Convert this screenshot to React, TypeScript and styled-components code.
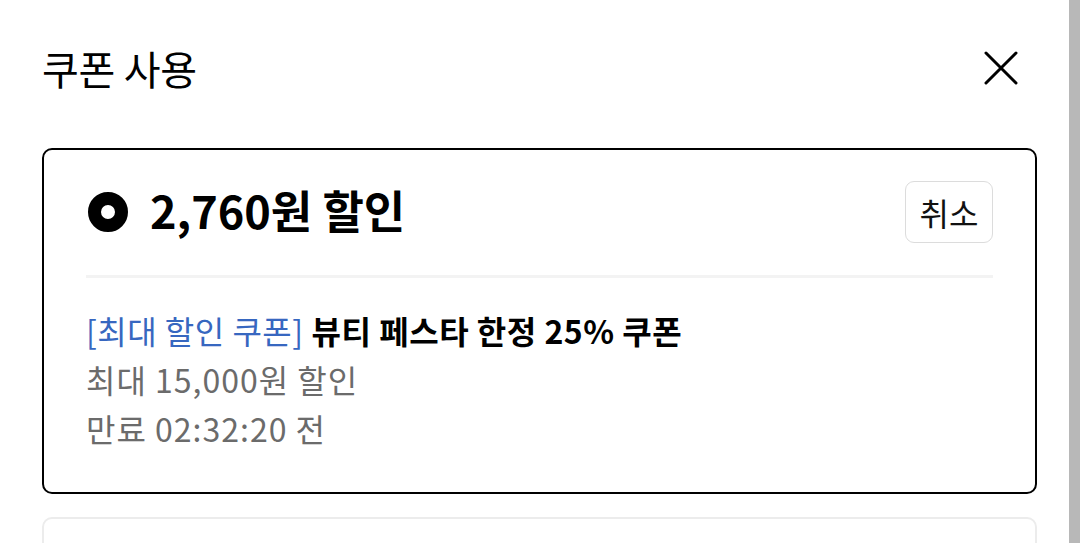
import styled, { createGlobalStyle } from "styled-components";

const GlobalStyle = createGlobalStyle`
  html, body {
    margin: 0;
    padding: 0;
    background: #fff;
  }
  body {
    font-family: "Noto Sans CJK KR", "Noto Sans", sans-serif;
    color: #000;
  }
`;

const StyledPage = styled.div`
  display: flex;
  width: 1080px;
  height: 543px;
  overflow: hidden;
`;

const StyledSheet = styled.div`
  flex: 1;
  display: flex;
  flex-direction: column;
  padding: 0 32px 0 42px;
`;

const StyledScrollbar = styled.div`
  width: 11px;
  flex-shrink: 0;
  background: #b8b8b8;
`;

const StyledHeader = styled.div`
  display: flex;
  align-items: center;
  justify-content: space-between;
  flex-shrink: 0;
  height: 148px;
  padding-bottom: 13px;
  box-sizing: border-box;
`;

const StyledTitle = styled.h1`
  margin: 0;
  font-size: 40px;
  font-weight: 400;
  letter-spacing: -0.3px;
`;

const StyledCloseButton = styled.button`
  display: flex;
  align-items: center;
  justify-content: center;
  width: 48px;
  height: 48px;
  margin-right: 12px;
  padding: 0;
  border: none;
  background: none;
`;

const StyledCard = styled.div<{ $selected?: boolean }>`
  border: 2px solid ${({ $selected }) => ($selected ? "#000" : "#ececec")};
  border-radius: 10px;
  padding: 31px 42px 0 42px;
  height: ${({ $selected }) => ($selected ? "346px" : "auto")};
  box-sizing: border-box;
  margin-bottom: 23px;
  flex-shrink: 0;
`;

const StyledCardTop = styled.div`
  display: flex;
  align-items: center;
  justify-content: space-between;
  padding-bottom: 32px;
  border-bottom: 3px solid #f3f3f3;
`;

const StyledAmount = styled.div`
  display: flex;
  align-items: center;
  gap: 22px;
  font-size: 45px;
  line-height: 1.2;
  font-weight: 700;
  letter-spacing: 0;
`;

const StyledAmountText = styled.span`
  padding-bottom: 4px;
`;

const StyledRadio = styled.span`
  width: 40px;
  height: 40px;
  border-radius: 50%;
  border: 13px solid #000;
  box-sizing: border-box;
  margin-left: 2px;
`;

const StyledCancelButton = styled.button`
  width: 88px;
  height: 62px;
  border: 1.5px solid #dcdcdc;
  border-radius: 9px;
  background: #fff;
  font-family: inherit;
  font-size: 32px;
  color: #111;
  padding: 0;
`;

const StyledDetails = styled.div`
  display: flex;
  flex-direction: column;
  padding-top: 28px;
  line-height: 49px;
  font-size: 32px;
`;

const StyledCouponName = styled.div`
  font-weight: 700;
  letter-spacing: 0.5px;
`;

const StyledTag = styled.span`
  color: #3767c0;
  font-weight: 400;
  margin-right: 8px;
`;

const StyledMeta = styled.div`
  color: #6b6b6b;
  letter-spacing: 1px;
`;

const App = () => (
  <>
    <GlobalStyle />
    <StyledPage>
      <StyledSheet>
        <StyledHeader>
          <StyledTitle>쿠폰 사용</StyledTitle>
          <StyledCloseButton aria-label="닫기">
            <svg width="34" height="34" viewBox="0 0 34 34">
              <path
                d="M2 2 L32 32 M32 2 L2 32"
                stroke="#000"
                strokeWidth="3"
                strokeLinecap="round"
              />
            </svg>
          </StyledCloseButton>
        </StyledHeader>
        <StyledCard $selected>
          <StyledCardTop>
            <StyledAmount>
              <StyledRadio />
              <StyledAmountText>2,760원 할인</StyledAmountText>
            </StyledAmount>
            <StyledCancelButton>취소</StyledCancelButton>
          </StyledCardTop>
          <StyledDetails>
            <StyledCouponName>
              <StyledTag>[최대 할인 쿠폰]</StyledTag>뷰티 페스타 한정 25% 쿠폰
            </StyledCouponName>
            <StyledMeta>최대 15,000원 할인</StyledMeta>
            <StyledMeta>만료 02:32:20 전</StyledMeta>
          </StyledDetails>
        </StyledCard>
        <StyledCard>
          <div style={{ height: 120 }} />
        </StyledCard>
      </StyledSheet>
      <StyledScrollbar />
    </StyledPage>
  </>
);

export default App;
